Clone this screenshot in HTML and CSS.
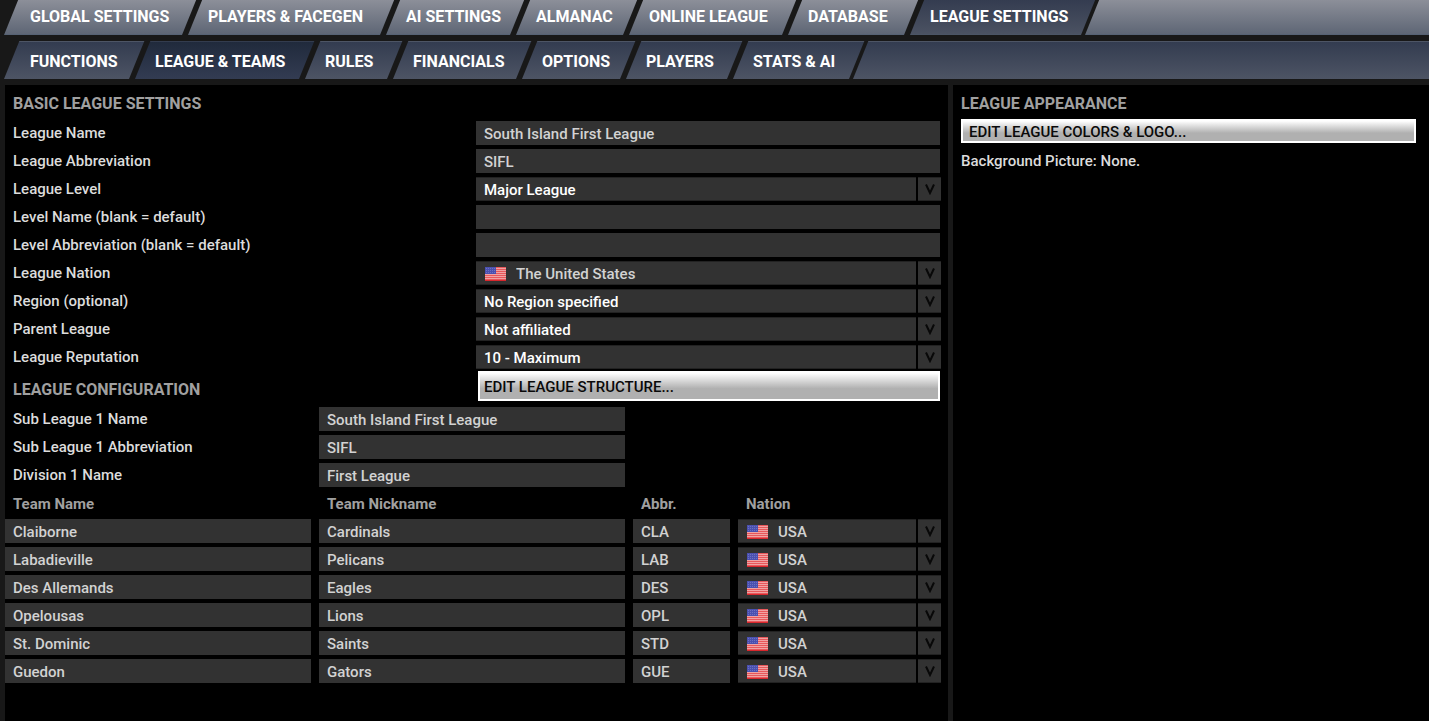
FILE: index.html
```html
<!DOCTYPE html>
<html lang="en">
<head>
  <meta charset="UTF-8">
  <title>League Settings</title>
  <link rel="stylesheet" href="styles.css">
</head>
<body>
  <svg width="0" height="0" class="defs" aria-hidden="true">
    <symbol id="flag-us" viewBox="0 0 21 14">
      <rect width="21" height="14" fill="#f0a3a3"/>
      <path d="M0 .5h21M0 2.5h21M0 4.5h21M0 6.5h21M0 8.5h21M0 10.5h21M0 12.5h21" stroke="#e8585b" stroke-width="1"/>
      <path d="M0 13.5h21" stroke="#d8262c"/>
      <rect width="11" height="7" fill="#4a50b0"/>
      <path d="M1 1.5h10M1 3.5h10M1 5.5h10" stroke="#6c71c2" stroke-dasharray="1 1"/>
    </symbol>
    <symbol id="arrow" viewBox="0 0 10 11">
      <path d="M1 .5L5 9L9 .5" fill="none" stroke="#080808" stroke-width="2"/>
    </symbol>
  </svg>

  <nav class="tabs tabs-main">
    <a href="#">GLOBAL SETTINGS</a>
    <a href="#">PLAYERS &amp; FACEGEN</a>
    <a href="#">AI SETTINGS</a>
    <a href="#">ALMANAC</a>
    <a href="#">ONLINE LEAGUE</a>
    <a href="#">DATABASE</a>
    <a href="#" class="active">LEAGUE SETTINGS</a>
    <span class="rest"></span>
  </nav>
  <nav class="tabs tabs-sub">
    <a href="#">FUNCTIONS</a>
    <a href="#" class="active">LEAGUE &amp; TEAMS</a>
    <a href="#">RULES</a>
    <a href="#">FINANCIALS</a>
    <a href="#">OPTIONS</a>
    <a href="#">PLAYERS</a>
    <a href="#">STATS &amp; AI</a>
    <span class="rest"></span>
  </nav>

  <main>
    <section class="panel settings">
      <h2>BASIC LEAGUE SETTINGS</h2>
      <div class="form basic">
        <label for="name">League Name</label>
        <input type="text" id="name" value="South Island First League">
        <label for="abbr">League Abbreviation</label>
        <input type="text" id="abbr" value="SIFL">
        <label for="level">League Level</label>
        <div class="select">
          <select id="level"><option>Major League</option></select>
          <span class="arrow"><svg><use href="#arrow"/></svg></span>
        </div>
        <label for="level-name">Level Name (blank = default)</label>
        <input type="text" id="level-name">
        <label for="level-abbr">Level Abbreviation (blank = default)</label>
        <input type="text" id="level-abbr">
        <label for="nation">League Nation</label>
        <div class="select nation">
          <select id="nation"><option>The United States</option></select>
          <svg class="flag"><use href="#flag-us"/></svg>
          <span class="arrow"><svg><use href="#arrow"/></svg></span>
        </div>
        <label for="region">Region (optional)</label>
        <div class="select">
          <select id="region"><option>No Region specified</option></select>
          <span class="arrow"><svg><use href="#arrow"/></svg></span>
        </div>
        <label for="parent">Parent League</label>
        <div class="select">
          <select id="parent"><option>Not affiliated</option></select>
          <span class="arrow"><svg><use href="#arrow"/></svg></span>
        </div>
        <label for="reputation">League Reputation</label>
        <div class="select">
          <select id="reputation"><option>10 - Maximum</option></select>
          <span class="arrow"><svg><use href="#arrow"/></svg></span>
        </div>
      </div>

      <div class="config-head">
        <h2>LEAGUE CONFIGURATION</h2>
        <button type="button">EDIT LEAGUE STRUCTURE...</button>
      </div>
      <div class="form config">
        <label for="sub-name">Sub League 1 Name</label>
        <input type="text" id="sub-name" value="South Island First League">
        <label for="sub-abbr">Sub League 1 Abbreviation</label>
        <input type="text" id="sub-abbr" value="SIFL">
        <label for="division">Division 1 Name</label>
        <input type="text" id="division" value="First League">
      </div>

      <table>
        <colgroup><col><col><col class="col-abbr"><col class="col-nation"></colgroup>
        <thead>
          <tr><th>Team Name</th><th>Team Nickname</th><th>Abbr.</th><th>Nation</th></tr>
        </thead>
        <tbody id="teams"></tbody>
      </table>
    </section>

    <section class="panel appearance">
      <h2>LEAGUE APPEARANCE</h2>
      <button type="button">EDIT LEAGUE COLORS &amp; LOGO...</button>
      <p>Background Picture: None.</p>
    </section>
  </main>

  <script>
    var teams = [
      ["Claiborne", "Cardinals", "CLA"],
      ["Labadieville", "Pelicans", "LAB"],
      ["Des Allemands", "Eagles", "DES"],
      ["Opelousas", "Lions", "OPL"],
      ["St. Dominic", "Saints", "STD"],
      ["Guedon", "Gators", "GUE"]
    ];
    var rows = "";
    for (var i = 0; i < teams.length; i++) {
      rows += "<tr>" +
        "<td><input type='text' aria-label='Team Name' value='" + teams[i][0] + "'></td>" +
        "<td><input type='text' aria-label='Team Nickname' value='" + teams[i][1] + "'></td>" +
        "<td><input type='text' aria-label='Abbr.' value='" + teams[i][2] + "'></td>" +
        "<td><div class='select nation'>" +
        "<select aria-label='Nation'><option>USA</option></select>" +
        "<svg class='flag'><use href='#flag-us'/></svg>" +
        "<span class='arrow'><svg><use href='#arrow'/></svg></span>" +
        "</div></td></tr>";
    }
    document.getElementById("teams").innerHTML = rows;
  </script>
</body>
</html>
```

FILE: styles.css
```css
* {
  box-sizing: border-box;
}
body {
  margin: 0;
  min-height: 100vh;
  display: flex;
  flex-direction: column;
  background-color: #181818;
  color: #dcdcdc;
  font-family: Roboto, "Liberation Sans", sans-serif;
  font-size: 15px;
  font-weight: 500;
}
.defs {
  position: absolute;
}

/* slanted tab bars */
.tabs {
  display: grid;
  margin-bottom: 6px;
  padding-left: 4px;
  overflow: hidden;
}
.tabs-main {
  height: 35px;
  grid-template-columns: 184px 198px 130px 113px 159px 122px 175px 1fr;
}
.tabs-sub {
  height: 38px;
  grid-template-columns: 131px 170px 88px 129px 104px 107px 120px 1fr;
}
.tabs a,
.tabs .rest {
  position: relative;
  z-index: 0;
  display: flex;
  align-items: center;
  padding-left: 20px;
  color: #fff;
  font-size: 16px;
  font-weight: 700;
  white-space: nowrap;
  text-decoration: none;
}
.tabs-main a {
  padding-bottom: 2px;
}
.tabs-sub a {
  padding-top: 2px;
}
.tabs a:first-child {
  padding-left: 26px;
}
.tabs a::before,
.tabs .rest::before {
  content: "";
  position: absolute;
  z-index: -1;
  top: 0;
  bottom: 0;
  left: 0;
  right: 6px;
  transform: skewX(-22deg);
  transform-origin: left bottom;
}
.tabs .rest::before {
  right: -20px;
}
.tabs a:nth-last-child(2)::before {
  right: 4px;
}
.tabs-main a::before,
.tabs-main .rest::before {
  background: linear-gradient(#8c8f99, #5e6675);
  border-bottom: 1px solid #566274;
}
.tabs-main a.active::before {
  background: linear-gradient(#343c50, #4b5262);
  border-bottom-color: #4b5566;
}
.tabs-sub a::before,
.tabs-sub .rest::before {
  background: linear-gradient(#333c50, #4d5464);
  border-top: 1px solid #4d5565;
}
.tabs-sub a.active::before {
  background: linear-gradient(#202a3c, #333c52);
  border-top-color: #333c4e;
}

main {
  flex: 1;
  display: grid;
  grid-template-columns: 943fr 476fr;
  gap: 5px;
  padding-left: 5px;
}
.panel {
  background-color: #000;
}
.settings {
  padding-right: 7px;
}
h2 {
  margin: 0;
  padding: 2px 0 0 8px;
  color: #a0a0a0;
  font-size: 16px;
  font-weight: 700;
  line-height: 34px;
}

/* forms */
.form {
  display: grid;
  grid-auto-rows: 24px;
  row-gap: 4px;
}
.basic {
  grid-template-columns: 1fr 465px;
}
.config {
  grid-template-columns: 1fr 1fr 308px;
}
.config label {
  grid-column: 1;
}
.basic input {
  margin-right: 1px;
}
.config input {
  margin-right: 8px;
}
label {
  padding-left: 8px;
  line-height: 24px;
}
input,
select {
  width: 100%;
  min-width: 0;
  height: 24px;
  margin: 0;
  padding: 2px 8px 0;
  border: 0;
  border-radius: 0;
  background-color: #323232;
  color: #d2d2d2;
  font: inherit;
}
.form input {
  width: auto;
}
.select {
  position: relative;
  display: flex;
  gap: 2px;
}
select {
  appearance: none;
  flex: 1;
  border: solid #222;
  border-width: 1px 0;
  color: #fff;
}
.nation select {
  padding-left: 40px;
  color: #d2d2d2;
}
.arrow {
  display: grid;
  place-items: center;
  width: 23px;
  height: 24px;
  background-color: #323232;
  border: solid #222;
  border-width: 1px 0;
  pointer-events: none;
}
.arrow svg {
  width: 10px;
  height: 11px;
}
.flag {
  position: absolute;
  top: 6px;
  left: 9px;
  width: 21px;
  height: 14px;
  pointer-events: none;
}

button {
  padding: 2px 4px 0;
  border: 2px solid #fff;
  background: linear-gradient(#fff, #b0b0b0 60%);
  color: #0a0a0a;
  font: inherit;
  text-align: left;
}
.config-head {
  display: grid;
  grid-template-columns: 1fr 462px;
  align-items: start;
  margin: 2px 1px 0 0;
}
.config-head button {
  height: 30px;
}

table {
  width: 100%;
  table-layout: fixed;
  border-collapse: collapse;
}
.col-abbr {
  width: 105px;
}
.col-nation {
  width: 203px;
}
th {
  height: 32px;
  padding: 2px 8px 0;
  color: #a0a0a0;
  font-weight: 700;
  text-align: left;
}
td {
  height: 28px;
  padding: 0 8px 4px 0;
}
td:last-child {
  padding-right: 0;
}
td input {
  display: block;
}

.appearance {
  padding: 0 13px 0 8px;
}
.appearance h2 {
  padding: 4px 0 0;
  line-height: 30px;
}
.appearance button {
  width: 100%;
  height: 24px;
  padding: 2px 6px 0;
}
.appearance p {
  margin: 4px 0;
  line-height: 28px;
}
```
